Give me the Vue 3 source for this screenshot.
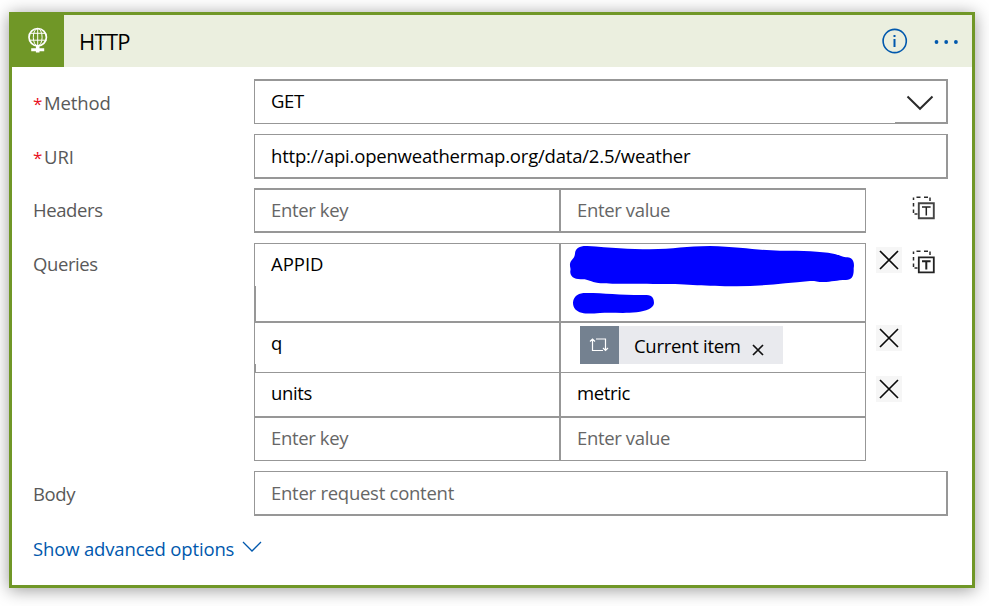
<script setup>
const queries = [
  { id: 'appid', key: 'APPID', kind: 'redacted' },
  { id: 'q', key: 'q', kind: 'token' },
  { id: 'units', key: 'units', kind: 'text', value: 'metric' },
  { id: 'empty', key: '', kind: 'empty' }
]
</script>

<template>
  <main class="stage">
    <section class="card">
      <header class="head">
        <div class="badge">
          <svg class="globe" viewBox="0 0 20 26">
            <g fill="none" stroke="#fff">
              <circle cx="9.7" cy="9.7" r="8.7" stroke-width="1.7" />
              <ellipse cx="9.7" cy="9.7" rx="4.4" ry="8.7" stroke-width="1" />
              <path d="M9.700 1v17.500M2.200 5.800h15M1 12.700h17.400" stroke-width="1" />
            </g>
            <path d="M7.900 18h3.600v2.800h4.700v2.900h-4.700v1.300H7.900v-1.300H3.200v-2.900h4.700z" fill="#fff" />
          </svg>
        </div>
        <h1 class="title">HTTP</h1>
        <svg class="info" viewBox="0 0 26 26">
          <circle cx="12.7" cy="13" r="11.600" fill="none" stroke="#0058ad" stroke-width="1.600" />
          <path d="M12.500 7v2M12.500 11v8" stroke="#0058ad" stroke-width="2" />
        </svg>
        <svg class="dots" viewBox="0 0 24 4" fill="#0058ad">
          <circle cx="2" cy="2" r="1.900" /><circle cx="11.700" cy="2" r="1.900" /><circle cx="21.400" cy="2" r="1.900" />
        </svg>
      </header>

      <div class="form">
        <div class="row method">
          <label class="label"><span class="req">*</span>Method</label>
          <div class="input select">
            <span>GET</span>
            <div class="drop">
              <svg viewBox="0 0 28 16"><path d="M1.500 1.500l12.500 12.300 12.500-12.300" fill="none" stroke="#2b2b2b" stroke-width="2" /></svg>
            </div>
          </div>
        </div>

        <div class="row uri">
          <label class="label"><span class="req">*</span>URI</label>
          <div class="input"><span class="url">http://api.openweathermap.org/data/2.5/weather</span></div>
        </div>

        <div class="row headers">
          <label class="label">Headers</label>
          <div class="table single">
            <div class="pair">
              <div class="cell hint">Enter key</div>
              <div class="cell hint">Enter value</div>
            </div>
          </div>
          <svg class="mode" viewBox="0 0 24 24">
            <path d="M1.500 4V1.500M4.500 1.200h4M12 1.200h4M18 1.500v3.500M1.500 7v3.500M1.500 13.500v3.500M2.500 18h3" fill="none" stroke="#2b2b2b" stroke-width="1.500" />
            <path d="M6.800 7.300h15v15h-15z" fill="#fff" stroke="#444" stroke-width="1.900" />
            <path d="M10 11h8.600M14.300 11v8.500" fill="none" stroke="#222" stroke-width="1.500" />
          </svg>
        </div>

        <div class="row queries">
          <label class="label">Queries</label>
          <div class="table multi">
            <div v-for="item in queries" :key="item.id" class="pair" :class="item.id">
              <div class="cell" :class="{ hint: !item.key }">{{ item.key || 'Enter key' }}</div>
              <div class="cell" :class="[item.kind, { hint: item.kind === 'empty' }]">
                <svg v-if="item.kind === 'redacted'" class="marker" viewBox="3 24 912 231" fill="#00f">
                  <path d="M45 52C47 36 60 29 82 30C150 35 210 40 270 40C340 39 380 30 450 30C540 33 600 43 660 44C730 44 780 45 820 53C840 57 850 64 862 64C880 66 884 80 881 97C882 120 876 131 858 132C830 132 815 138 790 138C770 138 765 134 750 135C670 142 600 151 530 151C430 151 390 144 300 144C220 142 150 145 115 141C90 138 85 129 65 130C40 131 29 120 31 104C33 97 29 92 30 84C32 70 44 70 45 52Z" />
                  <path d="M70 171C130 170 180 178 260 177C278 178 282 189 282 201C281 217 258 225 230 229C190 233 160 229 120 231C95 233 80 234 65 230C48 226 39 215 39 200C40 184 51 173 70 171Z" />
                </svg>
                <div v-else-if="item.kind === 'token'" class="pill">
                  <span class="pill-icon">
                    <svg viewBox="0 0 20 16" fill="none" stroke="#fff" stroke-width="1.200">
                      <path d="M3.500 2v11.500H14M1 4.500L3.500 2 6 4.500M7 2h9.500v11.500M14 11l2.500 2.500L19 11" />
                    </svg>
                  </span>
                  <span class="pill-text">Current item</span>
                  <svg class="pill-x" viewBox="0 0 12 12"><path d="M1 1l10 10M11 1L1 11" stroke="#111" stroke-width="1.700" /></svg>
                </div>
                <template v-else>{{ item.value || 'Enter value' }}</template>
              </div>
            </div>
          </div>
          <div class="removes">
            <button v-for="n in 3" :key="n" class="remove">
              <svg viewBox="0 0 20 20"><path d="M1 1l18 18M19 1L1 19" stroke="#0a0a0a" stroke-width="1.700" /></svg>
            </button>
          </div>
          <svg class="mode" viewBox="0 0 24 24">
            <path d="M1.500 4V1.500M4.500 1.200h4M12 1.200h4M18 1.500v3.500M1.500 7v3.500M1.500 13.500v3.500M2.500 18h3" fill="none" stroke="#2b2b2b" stroke-width="1.500" />
            <path d="M6.800 7.300h15v15h-15z" fill="#fff" stroke="#222" stroke-width="1.800" />
            <path d="M10 11.300h8.600M14.300 11v8.500" fill="none" stroke="#222" stroke-width="2" />
          </svg>
        </div>

        <div class="row body">
          <label class="label">Body</label>
          <div class="input hint"><span class="content">Enter request content</span></div>
        </div>

        <a class="advanced">
          <span>Show advanced options</span>
          <svg viewBox="0 0 20 12"><path d="M1 1l9 9 9-9" fill="none" stroke="#0058ad" stroke-width="1.300" /></svg>
        </a>
      </div>
    </section>
  </main>
</template>

<style>
body {
  margin: 0;
  background: #fff;
  overflow: hidden;
}
</style>

<style scoped>
* {
  box-sizing: border-box;
}
.stage {
  width: 989px;
  height: 606px;
  padding: 12px 14px 18px 9px;
  font-family: "Open Sans", "Noto Sans", sans-serif;
  font-size: 18.5px;
  line-height: 26px;
  letter-spacing: -0.4px;
  color: #000;
  white-space: nowrap;
}
.card {
  height: 576px;
  border: 3px solid #709727;
  background: #fff;
  box-shadow: 0 2px 16px rgba(0, 0, 0, 0.4);
}
.head {
  height: 52px;
  display: flex;
  align-items: center;
  background: #ebefdf;
}
.badge {
  width: 52px;
  height: 52px;
  padding: 12px 0 0 16px;
  background: #709727;
}
.globe {
  display: block;
  width: 20px;
  height: 27px;
}
.title {
  flex: 1;
  margin: 0 0 0 15px;
  font-size: 22px;
  font-weight: 400;
  line-height: 30px;
  letter-spacing: -0.7px;
}
.info {
  width: 26px;
  height: 26px;
  margin-right: 26px;
}
.dots {
  width: 25px;
  height: 4px;
  margin: 2px 13px 0 0;
}
.form {
  display: flex;
  flex-direction: column;
  padding: 12px 24px 0 21px;
}
.row {
  display: flex;
  align-items: flex-start;
  margin-bottom: 10px;
}
.label {
  width: 221px;
  flex: none;
  padding-top: 9px;
  color: #595959;
}
.req {
  display: inline-block;
  width: 11px;
  font-size: 17px;
  color: #e81123;
}
.input {
  flex: 1;
  height: 45px;
  padding: 8px 0 0 16px;
  border: solid #979797;
  border-width: 1px 2px 2px 1px;
}
.select {
  display: flex;
  justify-content: space-between;
  padding-top: 7px;
  border-width: 2px 2px 1px 1px;
}
.drop {
  width: 51px;
  height: 35px;
  padding: 7px 0 0 11px;
  border-bottom: 1px solid #979797;
}
.drop svg {
  display: block;
  width: 28px;
  height: 16px;
}
.url {
  letter-spacing: -0.2px;
}
.content {
  letter-spacing: -0.26px;
}
.method .label {
  padding-top: 11px;
  letter-spacing: -0.1px;
}
.uri {
  margin-bottom: 9px;
}
.uri .label {
  padding-top: 10px;
  letter-spacing: -0.1px;
}
.headers .label {
  letter-spacing: -0.4px;
}
.hint {
  color: #666;
}
.table {
  width: 612px;
  flex: none;
  border: 1px solid #979797;
}
.pair {
  display: grid;
  grid-template-columns: 306px 304px;
}
.cell {
  padding: 7px 0 0 16px;
  letter-spacing: -0.35px;
}
.cell:first-child {
  border-right: 2px solid #979797;
}
.single {
  border-width: 2px 1px;
}
.single .pair {
  height: 41px;
}
.multi .pair + .pair {
  border-top: 1px solid #979797;
}
.appid {
  height: 78px;
  border-bottom: 1px solid #979797;
}
.appid .cell:first-child {
  letter-spacing: 0;
  background: linear-gradient(#979797, #979797) left bottom / 1px 35px no-repeat;
}
.q {
  height: 50px;
}
.q .cell:first-child {
  background: linear-gradient(#979797, #979797) left bottom / 1px 8px no-repeat;
}
.units {
  height: 44px;
}
.multi .pair.empty {
  height: 44px;
  border-top-width: 2px;
}
.queries .label {
  padding-top: 8px;
}
.cell.redacted {
  padding: 0;
}
.marker {
  display: block;
  width: 304px;
  height: 77px;
}
.cell.token {
  padding: 3px 0 0 19px;
}
.pill {
  width: 203px;
  height: 38px;
  display: flex;
  align-items: center;
  background: #e9eaee;
}
.pill-icon {
  width: 39px;
  height: 38px;
  padding: 11px 0 0 9px;
  background: #748190;
}
.pill-icon svg {
  display: block;
  width: 20px;
  height: 16px;
}
.pill-text {
  width: 118px;
  margin: 1px 0 0 15px;
  letter-spacing: -0.28px;
}
.pill-x {
  width: 12px;
  height: 12px;
  margin-top: 9px;
}
.mode {
  width: 24px;
  height: 24px;
  flex: none;
}
.headers .mode {
  margin: 8px 0 0 46px;
}
.queries .mode {
  margin: 7px 0 0 10px;
}
.removes {
  width: 26px;
  margin: 4px 0 0 10px;
}
.remove {
  width: 26px;
  height: 26px;
  display: block;
  padding: 3px;
  border: 0;
  background: #f6f6f6;
}
.remove:nth-child(2) {
  margin: 52px 0 25px;
}
.remove svg {
  display: block;
  width: 20px;
  height: 20px;
}
.body .label {
  padding-top: 10px;
}
.advanced {
  display: flex;
  align-items: flex-start;
  margin-top: 10px;
  letter-spacing: -0.16px;
  color: #0058ad;
}
.advanced svg {
  width: 20px;
  height: 12px;
  margin: 5px 0 0 8px;
}
</style>
